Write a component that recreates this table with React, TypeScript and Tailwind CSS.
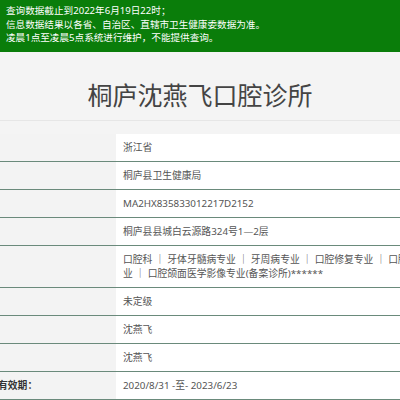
const rows: { label?: string; value: React.ReactNode }[] = [
  { value: "浙江省" },
  { value: "桐庐县卫生健康局" },
  { value: "MA2HX835833012217D2152" },
  { value: "桐庐县县城白云源路324号1—2层" },
  {
    value: (
      <>
        口腔科 ｜ 牙体牙髓病专业 ｜ 牙周病专业 ｜ 口腔修复专业 ｜ 口腔正畸专
        <br />
        业 ｜ 口腔颌面医学影像专业(备案诊所)******
      </>
    ),
  },
  { value: "未定级" },
  { value: "沈燕飞" },
  { value: "沈燕飞" },
  { label: "有效期：", value: "2020/8/31 -至- 2023/6/23" },
];

export default function App() {
  return (
    <div
      className="w-[400px] h-[400px] overflow-hidden bg-[#f4f4f4]"
      style={{ fontFamily: '"Noto Sans", "Noto Sans CJK SC", sans-serif' }}
    >
      {/* notice bar */}
      <div className="bg-[#0a7d0a] text-white text-[9.6px] leading-[13.5px] pl-[6px] pt-[4px] pb-[7px]">
        <p>查询数据截止到2022年6月19日22时；</p>
        <p>信息数据结果以各省、自治区、直辖市卫生健康委数据为准。</p>
        <p>凌晨1点至凌晨5点系统进行维护，不能提供查询。</p>
      </div>

      {/* title */}
      <div className="h-[69px] pt-[28px] border-b border-[#e6e6e6] text-center">
        <h1 className="text-[25px] leading-[30px] text-[#444]">桐庐沈燕飞口腔诊所</h1>
      </div>

      {/* info table */}
      <div className="mt-[13px] w-[520px]">
        {rows.map((r, i) => (
          <div key={i} className="flex border-b border-[#6a8a7b] text-[9.8px] leading-[14px]">
            <div className="w-[116px] shrink-0 bg-[#f3f3f3] pt-[7px] pb-[6px] text-[#333] font-semibold">
              {r.label && <span className="ml-[-2px]">{r.label}</span>}
            </div>
            <div className="flex-1 bg-white pl-[7px] pt-[7px] pb-[6px] text-[#555] whitespace-nowrap">
              {r.value}
            </div>
          </div>
        ))}
      </div>
    </div>
  );
}
